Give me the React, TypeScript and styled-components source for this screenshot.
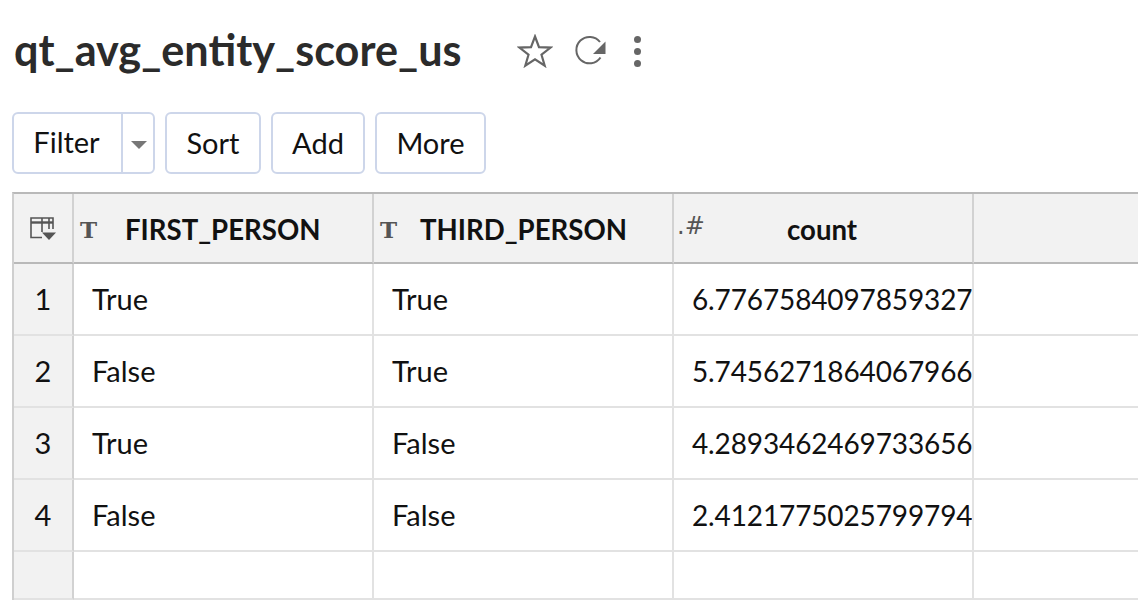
import styled, { createGlobalStyle } from "styled-components";

const rows = [
  ["1", "True", "True", "6.7767584097859327"],
  ["2", "False", "True", "5.7456271864067966"],
  ["3", "True", "False", "4.2893462469733656"],
  ["4", "False", "False", "2.4121775025799794"],
];

function App() {
  return (
    <Page>
      <GlobalStyle />
      <TitleBar>
        <Title>qt_avg_entity_score_us</Title>
        <TitleIcons>
          <svg width="36" height="34" viewBox="0 0 36 34" fill="none" stroke="#666" strokeWidth="2.2" strokeLinejoin="miter">
            <path d="M18 2.5l4 10.600 11.600.5-9.100 7.100 3.200 11-9.700-6.300-9.700 6.300 3.200-11-9.100-7.100 11.600-.5z" />
          </svg>
          <svg width="34" height="32" viewBox="0 0 34 32" fill="none">
            <path d="M26.500 22.500A13.200 13.200 0 1 1 26 7" stroke="#666" strokeWidth="2" />
            <path d="M31.500 6.500v12.500h-12.500z" fill="#666" />
          </svg>
          <Dots>
            <i />
            <i />
            <i />
          </Dots>
        </TitleIcons>
      </TitleBar>

      <Toolbar>
        <SplitButton>
          <SplitLabel>Filter</SplitLabel>
          <SplitArrow />
        </SplitButton>
        <ToolButton $width={96}>Sort</ToolButton>
        <ToolButton $width={94}>Add</ToolButton>
        <ToolButton $width={111}>More</ToolButton>
      </Toolbar>

      <Table>
        <HeadIndex>
          <svg width="26" height="24" viewBox="0 0 26 24" fill="none" stroke="#555" strokeWidth="1.600">
            <path d="M12 20.500H1V1h22v11" />
            <path d="M1 5.500h22" strokeWidth="2.400" />
            <path d="M12 1v14M19 1v11" />
            <path d="M12 15.500h14l-7 7.500z" fill="#555" stroke="none" />
          </svg>
        </HeadIndex>
        <HeadCell>
          <TypeIcon>T</TypeIcon>
          <HeadLabel $left={51}>FIRST_PERSON</HeadLabel>
        </HeadCell>
        <HeadCell>
          <TypeIcon>T</TypeIcon>
          <HeadLabel $left={46}>THIRD_PERSON</HeadLabel>
        </HeadCell>
        <HeadCell>
          <NumberIcon>.#</NumberIcon>
          <HeadLabel $left={113}>count</HeadLabel>
        </HeadCell>
        <HeadFill />

        {rows.map((row) => (
          <Row key={row[0]}>
            <IndexCell>{row[0]}</IndexCell>
            <Cell>{row[1]}</Cell>
            <Cell>{row[2]}</Cell>
            <NumberCell>{row[3]}</NumberCell>
            <Cell />
          </Row>
        ))}

        <Row $short>
          <IndexCell />
          <Cell />
          <Cell />
          <Cell />
          <Cell />
        </Row>
        <Row>
          <IndexCell />
          <Cell />
          <Cell />
          <Cell />
          <Cell />
        </Row>
      </Table>
    </Page>
  );
}

export default App;

const GlobalStyle = createGlobalStyle`
  html, body {
    margin: 0;
    padding: 0;
    height: 100%;
    overflow: hidden;
    background: #fff;
  }
`;

const Page = styled.div`
  width: 1138px;
  height: 600px;
  overflow: hidden;
  font-family: Lato, "Open Sans", sans-serif;
  color: #111;
`;

const TitleBar = styled.div`
  display: flex;
  align-items: center;
  height: 100px;
  padding-left: 14px;
`;

const Title = styled.h1`
  margin: -3px 0 0;
  font-size: 43.2px;
  font-weight: 700;
  line-height: 100px;
  color: #2b2b2b;
`;

const TitleIcons = styled.div`
  display: flex;
  align-items: center;
  gap: 21px;
  margin-left: 56px;
  margin-top: 2px;
`;

const Dots = styled.span`
  display: flex;
  flex-direction: column;
  gap: 5px;
  margin-left: 5px;

  i {
    display: block;
    width: 7px;
    height: 7px;
    border-radius: 50%;
    background: #666;
  }
`;

const Toolbar = styled.div`
  display: flex;
  gap: 10px;
  height: 62px;
  margin: 12px 0 18px 12px;
`;

const ToolButton = styled.button<{ $width: number }>`
  box-sizing: border-box;
  width: ${(p) => p.$width}px;
  height: 62px;
  padding: 0 0 2px;
  border: 2px solid #cdd6ea;
  border-radius: 6px;
  background: #fff;
  font: 400 29px Lato, sans-serif;
  color: #111;
`;

const SplitButton = styled.div`
  box-sizing: border-box;
  display: flex;
  width: 143px;
  height: 62px;
  border: 2px solid #cdd6ea;
  border-radius: 6px;
`;

const SplitLabel = styled.span`
  box-sizing: border-box;
  width: 109px;
  padding-right: 2px;
  border-right: 2px solid #cdd6ea;
  text-align: center;
  font-size: 29px;
  line-height: 56px;
`;

const SplitArrow = styled.span`
  width: 0;
  height: 0;
  margin: 27px 0 0 8px;
  border-left: 8px solid transparent;
  border-right: 8px solid transparent;
  border-top: 8px solid #777;
`;

const Table = styled.div`
  margin-left: 12px;
  border-top: 2px solid #b9b9b9;
  border-left: 2px solid #cfcfcf;
  display: grid;
  grid-template-columns: 60px 300px 300px 300px 1fr;
  grid-template-rows: 70px;
  grid-auto-rows: 72px;
`;

const HeadCell = styled.div`
  position: relative;
  box-sizing: border-box;
  display: flex;
  align-items: center;
  background: #f2f2f2;
  border-right: 2px solid #d2d2d2;
  border-bottom: 2px solid #b9b9b9;
`;

const HeadIndex = styled(HeadCell)`
  justify-content: center;
  padding-top: 2px;
`;

const HeadFill = styled(HeadCell)`
  border-right: 0;
`;

const HeadLabel = styled.span<{ $left: number }>`
  position: absolute;
  left: ${(p) => p.$left}px;
  top: 19px;
  font-size: 27.6px;
  font-weight: 700;
  line-height: 34px;
  color: #111;
  white-space: nowrap;
`;

const TypeIcon = styled.span`
  position: absolute;
  left: 6px;
  top: 24px;
  font: 700 23px/24px "DejaVu Serif", serif;
  color: #555;
`;

const NumberIcon = styled.span`
  position: absolute;
  left: 3px;
  top: 20px;
  font: 400 24px/24px "DejaVu Sans", sans-serif;
  color: #555;
`;

const Row = styled.div<{ $short?: boolean }>`
  display: grid;
  grid-column: 1 / -1;
  grid-template-columns: subgrid;
  height: ${(p) => (p.$short ? "48px" : "72px")};
`;

const Cell = styled.div`
  box-sizing: border-box;
  overflow: hidden;
  padding-left: 18px;
  border-right: 2px solid #e2e2e2;
  border-bottom: 2px solid #e2e2e2;
  font-size: 29px;
  line-height: 70px;
  white-space: nowrap;

  &:last-child {
    border-right: 0;
  }
`;

const NumberCell = styled(Cell)`
  font-size: 28px;
  letter-spacing: -0.13px;
`;

const IndexCell = styled.div`
  box-sizing: border-box;
  background: #f2f2f2;
  border-right: 2px solid #d2d2d2;
  border-bottom: 2px solid #e2e2e2;
  text-align: center;
  font-size: 29px;
  line-height: 70px;
`;
